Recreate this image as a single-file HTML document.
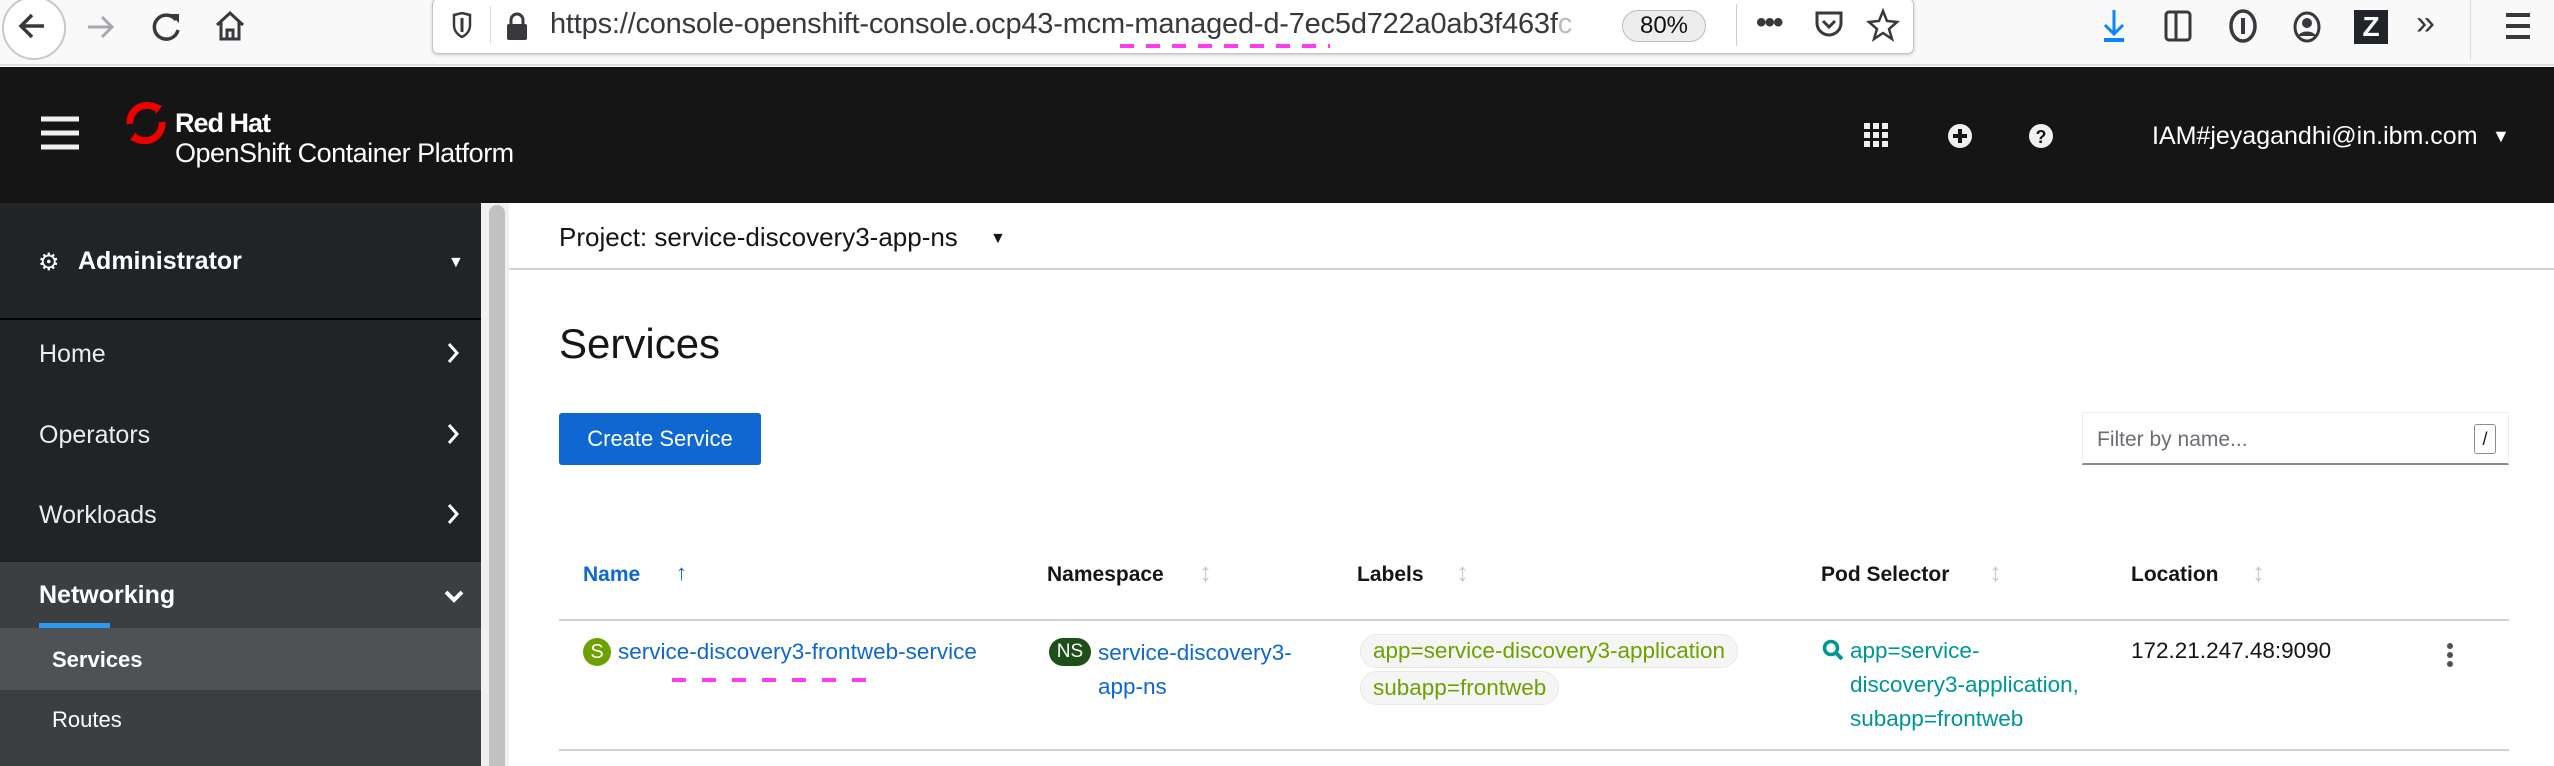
<!DOCTYPE html>
<html><head><meta charset="utf-8"><style>
*{box-sizing:border-box;margin:0;padding:0}
body{width:2554px;height:766px;overflow:hidden;background:#fff;font-family:"Liberation Sans",sans-serif;position:relative}
.a{position:absolute;white-space:nowrap}
</style></head><body>
<!-- browser toolbar -->
<div class="a" style="left:0;top:0;width:2554px;height:66px;background:#f9f9fa;border-bottom:2px solid #e0e0e2"></div>
<div class="a" style="left:2px;top:-4px;width:64px;height:64px;border:2px solid #c8c8c8;border-radius:50%;background:#fff"></div>
<svg class="a" style="left:14px;top:10px" width="40" height="32" viewBox="0 0 40 32"><path d="M30 16H8M18 5L7 16l11 11" stroke="#38383d" stroke-width="3.5" fill="none"/></svg>
<svg class="a" style="left:84px;top:12px" width="36" height="30" viewBox="0 0 36 30"><path d="M4 15h24M18 5l10 10-10 10" stroke="#a8a8ad" stroke-width="3" fill="none"/></svg>
<svg class="a" style="left:150px;top:10px" width="34" height="34" viewBox="0 0 34 34"><path d="M26 10A12 12 0 1 0 28 20" stroke="#38383d" stroke-width="3.5" fill="none"/><path d="M20 4h9v9z" fill="#38383d"/></svg>
<svg class="a" style="left:212px;top:8px" width="36" height="36" viewBox="0 0 36 36"><path d="M5 17L18 5l13 12M9 14v17h18V14M15 31v-9h6v9" stroke="#38383d" stroke-width="3" fill="none"/></svg>
<div class="a" style="left:432px;top:-2px;width:1482px;height:56px;background:#fff;border:1px solid #c4c4c4;border-radius:6px;box-shadow:0 1px 3px rgba(0,0,0,.2)"></div>
<svg class="a" style="left:452px;top:12px" width="20" height="26" viewBox="0 0 20 26"><path d="M2 3l8-2 8 2v10c0 6-4 10-8 12C6 23 2 19 2 13z" stroke="#38383d" stroke-width="2.5" fill="none"/><path d="M10 6v14" stroke="#38383d" stroke-width="3"/></svg>
<div class="a" style="left:490px;top:6px;width:1px;height:38px;background:#ddd"></div>
<svg class="a" style="left:506px;top:12px" width="22" height="28" viewBox="0 0 22 28"><path d="M5 13V8a6 6 0 0 1 12 0v5" stroke="#38383d" stroke-width="3" fill="none"/><rect x="1" y="12" width="20" height="16" rx="2" fill="#38383d"/></svg>
<div class="a" style="left:550px;top:8px;font-size:29px;color:#38383d;letter-spacing:-0.2px">https://console-openshift-console.ocp43-mcm-managed-d-7ec5d722a0ab3f463f<span style="color:#bbb">c</span></div>
<div class="a" style="left:1120px;top:44px;width:210px;height:4px;background:repeating-linear-gradient(90deg,#ff3cf0 0 14px,transparent 14px 26px)"></div>
<div class="a" style="left:1622px;top:10px;width:84px;height:32px;border:1px solid #bbb;border-radius:16px;background:#ededf0;font-size:24px;text-align:center;line-height:30px;color:#111">80%</div>
<div class="a" style="left:1736px;top:4px;width:1px;height:42px;background:#ccc"></div>
<div class="a" style="left:1756px;top:6px;font-size:30px;color:#38383d;font-weight:bold;letter-spacing:-2px">•••</div>
<svg class="a" style="left:1814px;top:10px" width="30" height="30" viewBox="0 0 30 30"><path d="M3 3h24v10a12 12 0 0 1-24 0z" stroke="#38383d" stroke-width="3" fill="none"/><path d="M9 11l6 6 6-6" stroke="#38383d" stroke-width="3" fill="none"/></svg>
<svg class="a" style="left:1866px;top:8px" width="34" height="34" viewBox="0 0 34 34"><path d="M17 3l4 10 10 1-8 7 3 10-9-6-9 6 3-10-8-7 10-1z" stroke="#38383d" stroke-width="2.5" fill="none"/></svg>
<svg class="a" style="left:2100px;top:8px" width="28" height="36" viewBox="0 0 28 36"><path d="M14 2v24M5 17l9 9 9-9" stroke="#0a84ff" stroke-width="3" fill="none"/><rect x="4" y="30" width="20" height="4" fill="#0a84ff"/></svg>
<svg class="a" style="left:2164px;top:10px" width="28" height="32" viewBox="0 0 28 32"><rect x="2" y="2" width="24" height="28" rx="3" stroke="#38383d" stroke-width="3" fill="none"/><path d="M12 2v28" stroke="#38383d" stroke-width="3"/></svg>
<svg class="a" style="left:2228px;top:8px" width="30" height="36" viewBox="0 0 30 36"><ellipse cx="15" cy="18" rx="12" ry="15" stroke="#38383d" stroke-width="3.5" fill="none"/><path d="M15 10v16" stroke="#38383d" stroke-width="4"/></svg>
<svg class="a" style="left:2292px;top:10px" width="30" height="34" viewBox="0 0 30 34"><ellipse cx="15" cy="17" rx="12" ry="14" stroke="#38383d" stroke-width="3" fill="none"/><circle cx="15" cy="13" r="5" fill="#38383d"/><path d="M6 26c3-6 15-6 18 0" fill="#38383d"/></svg>
<div class="a" style="left:2354px;top:10px;width:34px;height:34px;background:#212529;color:#fff;font-weight:bold;font-size:28px;text-align:center;line-height:34px">Z</div>
<div class="a" style="left:2416px;top:4px;font-size:34px;color:#38383d">»</div>
<div class="a" style="left:2470px;top:0;width:1px;height:60px;background:#ddd"></div>
<svg class="a" style="left:2504px;top:12px" width="28" height="28" viewBox="0 0 28 28"><path d="M2 3h24M2 14h24M2 25h24" stroke="#38383d" stroke-width="4"/></svg>

<!-- masthead -->
<div class="a" style="left:0;top:67px;width:2554px;height:136px;background:#151515"></div>
<svg class="a" style="left:41px;top:116px" width="38" height="34" viewBox="0 0 38 34"><path d="M0 3h38M0 17h38M0 31h38" stroke="#f0f0f0" stroke-width="5"/></svg>
<svg class="a" style="left:124px;top:100px" width="44" height="46" viewBox="0 0 44 46"><path d="M32 8A17 17 0 0 0 6 24" stroke="#e00" stroke-width="7" fill="none"/><path d="M12 38A17 17 0 0 0 38 22" stroke="#e00" stroke-width="7" fill="none"/><path d="M28 2l10 4-6 8z M16 44L6 40l6-8z" fill="#e00"/></svg>
<div class="a" style="left:175px;top:108px;font-size:27px;font-weight:bold;color:#fff;letter-spacing:-1px">Red Hat</div>
<div class="a" style="left:175px;top:138px;font-size:27px;color:#fff;letter-spacing:-0.5px">OpenShift Container Platform</div>
<svg class="a" style="left:1864px;top:123px" width="24" height="24" viewBox="0 0 24 24" fill="#f0f0f0"><rect x="0" y="0" width="6" height="6"/><rect x="9" y="0" width="6" height="6"/><rect x="18" y="0" width="6" height="6"/><rect x="0" y="9" width="6" height="6"/><rect x="9" y="9" width="6" height="6"/><rect x="18" y="9" width="6" height="6"/><rect x="0" y="18" width="6" height="6"/><rect x="9" y="18" width="6" height="6"/><rect x="18" y="18" width="6" height="6"/></svg>
<svg class="a" style="left:1947px;top:123px" width="26" height="26" viewBox="0 0 26 26"><circle cx="13" cy="13" r="12" fill="#f0f0f0"/><path d="M13 6v14M6 13h14" stroke="#151515" stroke-width="4"/></svg>
<svg class="a" style="left:2028px;top:123px" width="26" height="26" viewBox="0 0 26 26"><circle cx="13" cy="13" r="12" fill="#f0f0f0"/><text x="13" y="20" font-size="18" font-weight="bold" text-anchor="middle" fill="#151515" font-family="Liberation Sans">?</text></svg>
<div class="a" style="left:2152px;top:122px;font-size:25px;color:#fff">IAM#jeyagandhi@in.ibm.com</div>
<div class="a" style="left:2492px;top:126px;font-size:18px;color:#fff">▼</div>

<!-- sidebar -->
<div class="a" style="left:0;top:203px;width:481px;height:563px;background:#212427"></div>
<div class="a" style="left:0;top:318px;width:481px;height:2px;background:#030303"></div>
<div class="a" style="left:0;top:562px;width:481px;height:204px;background:#3c3f42"></div>
<div class="a" style="left:0;top:628px;width:481px;height:62px;background:#4f5255"></div>
<div class="a" style="left:39px;top:623px;width:71px;height:5px;background:#2b9af3"></div>
<div class="a" style="left:481px;top:203px;width:28px;height:563px;background:#f0f0f0"></div>
<div class="a" style="left:489px;top:205px;width:16px;height:561px;background:#c1c1c1;border-radius:8px 8px 0 0"></div>
<div class="a" style="left:38px;top:248px;font-size:24px;color:#fff">⚙</div>
<div class="a" style="left:78px;top:247px;font-size:25px;color:#fff;font-weight:bold">Administrator</div>
<div class="a" style="left:448px;top:254px;font-size:16px;color:#fff">▼</div>
<div class="a" style="left:39px;top:340px;font-size:25px;color:#ececec">Home</div>
<div class="a" style="left:39px;top:421px;font-size:25px;color:#ececec">Operators</div>
<div class="a" style="left:39px;top:501px;font-size:25px;color:#ececec">Workloads</div>
<div class="a" style="left:39px;top:581px;font-size:25px;color:#fff;font-weight:bold">Networking</div>
<div class="a" style="left:52px;top:647px;font-size:22px;color:#fff;font-weight:bold">Services</div>
<div class="a" style="left:52px;top:707px;font-size:22px;color:#fff">Routes</div>
<svg class="a" style="left:446px;top:342px" width="14" height="200" viewBox="0 0 14 200"><path d="M3 2l8 9-8 9M3 83l8 9-8 9M3 163l8 9-8 9" stroke="#fff" stroke-width="3" fill="none"/></svg>
<svg class="a" style="left:444px;top:590px" width="20" height="14" viewBox="0 0 20 14"><path d="M2 2l8 8 8-8" stroke="#fff" stroke-width="4" fill="none"/></svg>

<!-- main -->
<div class="a" style="left:509px;top:268px;width:2045px;height:2px;background:#d2d2d2"></div>
<div class="a" style="left:559px;top:222px;font-size:26px;color:#151515">Project: service-discovery3-app-ns</div>
<div class="a" style="left:990px;top:230px;font-size:16px;color:#151515">▼</div>
<div class="a" style="left:559px;top:320px;font-size:42px;color:#151515">Services</div>
<div class="a" style="left:559px;top:413px;width:202px;height:52px;background:#0f67d2;border-radius:3px;color:#fff;font-size:22px;text-align:center;line-height:52px">Create Service</div>
<div class="a" style="left:2082px;top:412px;width:427px;height:53px;border:1px solid #ededed;border-bottom:2px solid #8a8d90"></div>
<div class="a" style="left:2097px;top:428px;font-size:21px;color:#6a6e73">Filter by name...</div>
<div class="a" style="left:2474px;top:424px;width:22px;height:30px;border:1px solid #8a8d90;border-radius:3px;font-size:18px;text-align:center;line-height:28px;color:#151515">/</div>

<div class="a" style="left:583px;top:563px;font-size:21px;color:#0f67d2;font-weight:bold">Name</div>
<div class="a" style="left:676px;top:560px;font-size:22px;color:#0f67d2;font-weight:bold">↑</div>
<div class="a" style="left:1047px;top:563px;font-size:21px;color:#151515;font-weight:bold">Namespace</div>
<div class="a" style="left:1357px;top:563px;font-size:21px;color:#151515;font-weight:bold">Labels</div>
<div class="a" style="left:1821px;top:563px;font-size:21px;color:#151515;font-weight:bold">Pod Selector</div>
<div class="a" style="left:2131px;top:563px;font-size:21px;color:#151515;font-weight:bold">Location</div>
<div class="a" style="left:1199px;top:557px;font-size:26px;color:#c8c8c8">↕</div>
<div class="a" style="left:1456px;top:557px;font-size:26px;color:#c8c8c8">↕</div>
<div class="a" style="left:1989px;top:557px;font-size:26px;color:#c8c8c8">↕</div>
<div class="a" style="left:2252px;top:557px;font-size:26px;color:#c8c8c8">↕</div>
<div class="a" style="left:559px;top:619px;width:1950px;height:2px;background:#d2d2d2"></div>
<div class="a" style="left:559px;top:749px;width:1950px;height:2px;background:#d2d2d2"></div>

<div class="a" style="left:583px;top:638px;width:28px;height:28px;border-radius:50%;background:#6ca100;color:#fff;font-size:20px;text-align:center;line-height:28px">S</div>
<div class="a" style="left:618px;top:639px;font-size:22.5px;color:#0f67d2">service-discovery3-frontweb-service</div>
<div class="a" style="left:672px;top:678px;width:210px;height:4px;background:repeating-linear-gradient(90deg,#ff3cf0 0 14px,transparent 14px 30px)"></div>
<div class="a" style="left:1049px;top:638px;width:42px;height:28px;border-radius:14px;background:#1e4f18;color:#fff;font-size:19px;text-align:center;line-height:28px">NS</div>
<div class="a" style="left:1098px;top:636px;font-size:22.5px;color:#0f67d2;line-height:34px">service-discovery3-<br>app-ns</div>
<div class="a" style="left:1360px;top:634px;height:34px;padding:0 12px;border:1px solid #e8e8e8;background:#f5f5f5;border-radius:17px;font-size:22.5px;color:#6ca100;line-height:32px">app=service-discovery3-application</div>
<div class="a" style="left:1360px;top:671px;height:34px;padding:0 12px;border:1px solid #e8e8e8;background:#f5f5f5;border-radius:17px;font-size:22.5px;color:#6ca100;line-height:32px">subapp=frontweb</div>
<svg class="a" style="left:1822px;top:639px" width="22" height="22" viewBox="0 0 22 22"><circle cx="9" cy="9" r="6.5" stroke="#009596" stroke-width="3.5" fill="none"/><path d="M14 14l6 6" stroke="#009596" stroke-width="4"/></svg>
<div class="a" style="left:1850px;top:634px;font-size:22.5px;color:#009596;line-height:34px">app=service-<br>discovery3-application,<br>subapp=frontweb</div>
<div class="a" style="left:2131px;top:638px;font-size:22.5px;color:#151515">172.21.247.48:9090</div>
<svg class="a" style="left:2446px;top:642px" width="8" height="26" viewBox="0 0 8 26" fill="#4f5255"><circle cx="4" cy="4" r="3"/><circle cx="4" cy="13" r="3"/><circle cx="4" cy="22" r="3"/></svg>
</body></html>
